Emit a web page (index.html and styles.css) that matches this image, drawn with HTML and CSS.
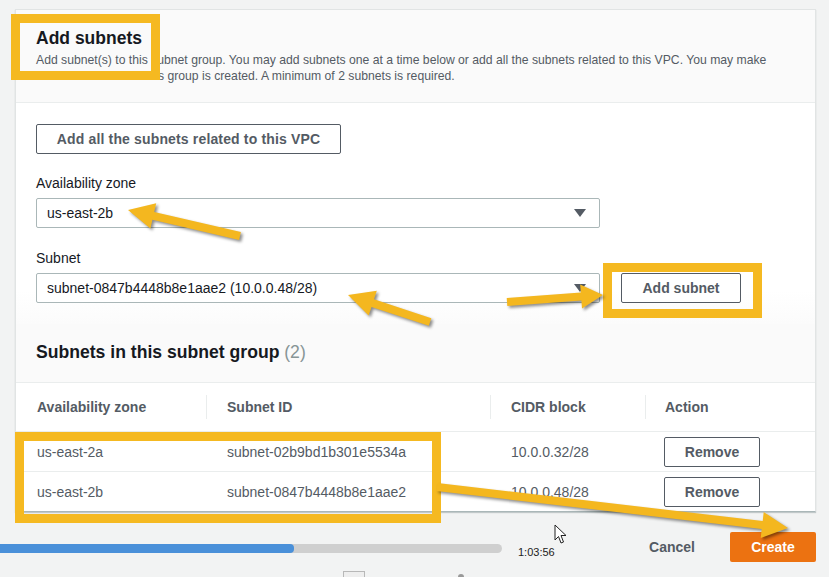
FILE: index.html
```html
<!DOCTYPE html>
<html lang="en">

<head>
    <meta charset="UTF-8">
    <meta name="viewport" content="width=device-width, initial-scale=1.0">
    <title>Add subnets</title>
    <link rel="stylesheet" href="styles.css">
</head>

<body>
    <div class="panel">
        <div class="panel-head">
            <h2>Add subnets</h2>
            <p class="desc">Add subnet(s) to this subnet group. You may add subnets one at a time below or add all the subnets related to this VPC. You may make additions/edits after this group is created. A minimum of 2 subnets is required.</p>
        </div>

        <div class="panel-body">
            <button class="btn btn-all">Add all the subnets related to this VPC</button>

            <label class="field-label">Availability zone</label>
            <div class="select">
                <span>us-east-2b</span>
                <span class="caret"></span>
            </div>

            <label class="field-label second">Subnet</label>
            <div class="field-row">
                <div class="select">
                    <span>subnet-0847b4448b8e1aae2 (10.0.0.48/28)</span>
                    <span class="caret"></span>
                </div>
                <button class="btn btn-add">Add subnet</button>
            </div>
        </div>

        <div class="group-head">
            <h3>Subnets in this subnet group <span class="count">(2)</span></h3>
        </div>

        <table class="subnets">
            <thead>
                <tr>
                    <th class="c1">Availability zone</th>
                    <th class="c2"><span class="sep"></span>Subnet ID</th>
                    <th class="c3"><span class="sep"></span>CIDR block</th>
                    <th class="c4"><span class="sep"></span>Action</th>
                </tr>
            </thead>
            <tbody>
                <tr>
                    <td>us-east-2a</td>
                    <td>subnet-02b9bd1b301e5534a</td>
                    <td>10.0.0.32/28</td>
                    <td><button class="btn btn-remove">Remove</button></td>
                </tr>
                <tr>
                    <td>us-east-2b</td>
                    <td>subnet-0847b4448b8e1aae2</td>
                    <td>10.0.0.48/28</td>
                    <td><button class="btn btn-remove">Remove</button></td>
                </tr>
            </tbody>
        </table>
    </div>

    <div class="footer">
        <div class="progress">
            <div class="progress-fill" style="width: 294px"></div>
        </div>
        <span class="time">1:03:56</span>
        <button class="link-btn">Cancel</button>
        <button class="primary">Create</button>
    </div>

    <!-- video controls peeking in at the bottom -->
    <div class="ctrl-square"></div>
    <div class="ctrl-speaker"></div>

    <!-- annotation layer -->
    <div class="mark mark-title"></div>
    <div class="mark mark-add"></div>
    <div class="mark mark-rows"></div>

    <svg class="arrows" width="829" height="577" viewBox="0 0 829 577">
        <polygon points="240.9,232.1 154.2,212 156.2,203.2 128,210 150.4,228.6 152.4,219.8 239.1,239.9" />
        <polygon points="431.3,318.2 374,299.3 376.8,290.8 348,295 368.6,315.5 371.5,306.9 428.8,325.8" />
        <polygon points="507.3,306 581.4,300.6 582,308.6 603,295 580.2,284.6 580.8,292.6 506.7,298" />
        <polygon points="436.5,491 761.7,529 760.7,537.9 788,528 763.7,512.1 762.7,521 437.5,483" />
    </svg>

    <svg class="cursor" width="14" height="22" viewBox="0 0 14 22">
        <path d="M1 1 L1 16 L4.5 12.5 L7 19 L9.5 18 L7 11.5 L12 11.5 Z" fill="#fff" stroke="#222" stroke-width="1" />
    </svg>
</body>

</html>
```

FILE: styles.css
```css
body {
    margin: 0;
    position: relative;
    width: 829px;
    height: 577px;
    overflow: hidden;
    background-color: #f2f3f3;
    font-family: "Liberation Sans", Arial, sans-serif;
    color: #16191f;
}

.panel {
    margin: 9px 13px 0 15px;
    background-color: #fff;
    border: 1px solid #e1e4e4;
    border-bottom-color: #aab7b8;
    box-shadow: 0 1px 1px 0 rgba(0, 28, 36, 0.2);
}

.panel-head {
    background-color: #fafafa;
    padding: 17px 20px 18px 20px;
    border-bottom: 1px solid #eaeded;
}

.panel-head h2 {
    margin: 0;
    font-size: 17.5px;
    line-height: 22px;
    font-weight: bold;
}

.desc {
    margin: 3px 0 0 0;
    font-size: 12.2px;
    line-height: 16px;
    color: #545b64;
}

.panel-body {
    padding: 21px 20px 21px 20px;
    display: flex;
    flex-direction: column;
    align-items: flex-start;
    background: linear-gradient(#fff 85%, #fbfbfb);
}

.btn {
    font-family: inherit;
    font-size: 14px;
    font-weight: bold;
    color: #545b64;
    background-color: #fff;
    border: 1px solid #545b64;
    border-radius: 2px;
    height: 30px;
    padding: 0 20px;
    cursor: pointer;
}

.btn-all {
    width: 305px;
    padding: 0;
    letter-spacing: 0.15px;
}

.field-label {
    font-size: 14px;
    line-height: 20px;
    margin-top: 19px;
    margin-bottom: 5px;
}

.field-label.second {
    margin-top: 20px;
}

.select {
    width: 564px;
    height: 30px;
    box-sizing: border-box;
    border: 1px solid #aab7b8;
    border-radius: 2px;
    background-color: #fff;
    display: flex;
    align-items: center;
    justify-content: space-between;
    padding: 0 13px 0 10px;
    font-size: 14px;
    color: #16191f;
}

.caret {
    width: 0;
    height: 0;
    border-left: 6px solid transparent;
    border-right: 6px solid transparent;
    border-top: 8px solid #545b64;
}

.field-row {
    display: flex;
    align-items: center;
    gap: 21px;
}

.btn-add {
    width: 120px;
    padding: 0;
}

.group-head {
    background-color: #fafafa;
    padding: 17px 20px 19px 20px;
    border-bottom: 1px solid #eaeded;
}

.group-head h3 {
    margin: 0;
    font-size: 17.6px;
    line-height: 22px;
    font-weight: bold;
}

.count {
    font-weight: normal;
    color: #879596;
}

.subnets {
    width: 100%;
    border-collapse: collapse;
    font-size: 14px;
    color: #545b64;
}

.subnets th {
    position: relative;
    text-align: left;
    height: 48px;
    padding: 0 0 0 21px;
    font-weight: bold;
}

.subnets .c1 {
    width: 169px;
}

.subnets .c2 {
    width: 263px;
}

.subnets .c3 {
    width: 134px;
}

.subnets .c4 {
    padding-left: 20px;
}

.sep {
    position: absolute;
    left: 0;
    top: 12px;
    bottom: 12px;
    border-left: 1px solid #eaeded;
}

.subnets td {
    height: 39px;
    padding: 0 0 0 21px;
    border-top: 1px solid #eaeded;
}

.subnets td:last-child {
    padding-left: 19px;
}

.btn-remove {
    width: 96px;
    padding: 0;
}

.footer {
    display: flex;
    align-items: center;
    margin-top: 20px;
    padding-right: 13px;
    height: 30px;
}

.progress {
    width: 502px;
    height: 9px;
    margin-top: 2px;
    background-color: #cfcfcf;
    border-radius: 0 5px 5px 0;
}

.progress-fill {
    height: 100%;
    background-color: #4a90d9;
    border-radius: 0 4px 4px 0;
}

.time {
    margin-left: 16px;
    margin-top: 10px;
    font-size: 11px;
    color: #222;
}

.link-btn {
    margin-left: auto;
    font-family: inherit;
    font-size: 14px;
    font-weight: bold;
    color: #545b64;
    background: none;
    border: none;
    padding: 0;
}

.primary {
    margin-left: 35px;
    width: 86px;
    height: 30px;
    font-family: inherit;
    font-size: 14px;
    font-weight: bold;
    color: #fff;
    background-color: #ec7211;
    border: none;
    border-radius: 2px;
}

.ctrl-square {
    position: absolute;
    left: 343px;
    top: 571px;
    width: 20px;
    height: 12px;
    border: 1px solid #b8b8b8;
    background-color: #eee;
}

.ctrl-speaker {
    position: absolute;
    left: 458px;
    top: 574px;
    width: 6px;
    height: 4px;
    background-color: #999;
    border-radius: 3px 3px 0 0;
}

.mark {
    position: absolute;
    border: 9px solid #f5b921;
}

.mark-title {
    left: 11px;
    top: 14px;
    width: 131px;
    height: 48px;
}

.mark-add {
    left: 603px;
    top: 263px;
    width: 141px;
    height: 37px;
}

.mark-rows {
    left: 15px;
    top: 432px;
    width: 408px;
    height: 73px;
}

.arrows {
    position: absolute;
    left: 0;
    top: 0;
    pointer-events: none;
}

.arrows polygon {
    fill: #f4b71f;
    filter: drop-shadow(2px 2px 1.5px rgba(0, 0, 0, 0.45));
}

.cursor {
    position: absolute;
    left: 554px;
    top: 524px;
}
```
